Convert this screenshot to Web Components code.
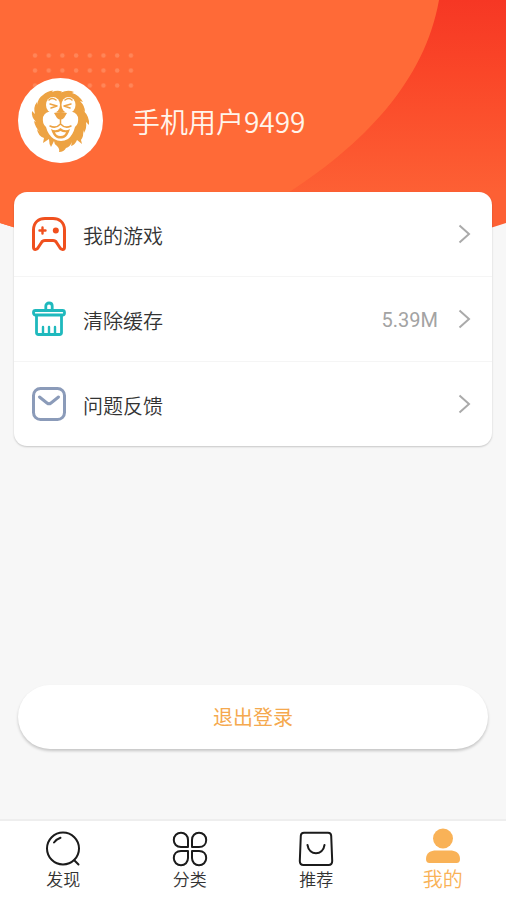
<!DOCTYPE html>
<html lang="zh-CN">
<head>
<meta charset="utf-8">
<meta name="viewport" content="width=device-width, initial-scale=1">
<title>我的</title>
<style>
body { margin: 0; background: #f7f7f7; font-family: Roboto, "Noto Sans CJK SC", sans-serif; }
</style>
</head>
<body>
<profile-page></profile-page>

<template id="t-page">
<style>
:host { display: flex; flex-direction: column; min-height: 100vh; position: relative; color: #333; }
page-backdrop { position: absolute; top: 0; left: 0; right: 0; z-index: -1; }
main { flex: 1; display: flex; flex-direction: column; }
menu-card { margin: 29px 14px 0; }
logout-button { margin: auto 18px 70px; }
</style>
<page-backdrop></page-backdrop>
<user-header name="手机用户9499"></user-header>
<main>
<menu-card>
<menu-row label="我的游戏">
<svg slot="icon" width="36" height="36" viewBox="0 0 36 36" fill="none" stroke="#f0501e" stroke-width="3" stroke-linejoin="round" stroke-linecap="round"><path d="M2.500 14C2.500 6 8 2.500 14 2.500H22C28 2.500 33.500 6 33.500 14V31Q33.500 33.500 31.500 33.500Q29.800 33.500 28.800 31.500L25.500 26.500Q24.500 24.500 22 24.500H14Q11.500 24.500 10.500 26.500L7.200 31.500Q6.200 33.500 4.500 33.500Q2.500 33.500 2.500 31Z"/><path stroke-width="2.400" d="M8.500 14.500H14.500M11.500 11.500V17.500"/><circle cx="24.800" cy="14.500" r="3" fill="#f0501e" stroke="none"/></svg>
</menu-row>
<menu-row label="清除缓存" value="5.39M">
<svg slot="icon" width="36" height="36" viewBox="0 0 36 36" fill="none" stroke="#1fb9bd" stroke-width="2.800" stroke-linejoin="round" stroke-linecap="round"><rect x="2.500" y="9.500" width="31" height="4.500" rx="2"/><path d="M14.800 9V5C14.800 1 21.200 1 21.200 5V9M5.500 15V31.500Q5.500 33.500 7.500 33.500H28.500Q30.500 33.500 30.500 31.500V15"/><path stroke-width="2.400" d="M12 26V32.500M18 26V32.500M24 26V32.500"/></svg>
</menu-row>
<menu-row label="问题反馈">
<svg slot="icon" width="36" height="36" viewBox="0 0 36 36" fill="none" stroke="#8b9bb9" stroke-width="3" stroke-linejoin="round" stroke-linecap="round"><rect x="2.500" y="2.500" width="31" height="31" rx="7"/><path d="M8.500 11L16 17Q18 18.600 20 17L27.500 11"/></svg>
</menu-row>
</menu-card>
<logout-button>退出登录</logout-button>
</main>
<tab-bar>
<tab-item label="发现">
<svg width="36" height="36" viewBox="0 0 36 36" fill="none" stroke="#1b1b1b" stroke-width="2" stroke-linecap="round"><circle cx="18" cy="17.500" r="16"/><path d="M29.500 29.500L33.500 33.500M9 11.500Q11.500 8.200 15.500 6.800"/></svg>
</tab-item>
<tab-item label="分类">
<svg width="36" height="36" viewBox="0 0 36 36" fill="none" stroke="#1b1b1b" stroke-width="2" stroke-linejoin="round"><path d="M16 16H9C4.500 16 1.800 13 1.800 9C1.800 4.800 5 1.800 9 1.800C13 1.800 16 4.800 16 9ZM20 16V9C20 4.800 23 1.800 27 1.800C31 1.800 34.200 4.800 34.200 9C34.200 13 31.500 16 27 16ZM16 20V27C16 31.200 13 34.200 9 34.200C5 34.200 1.800 31.200 1.800 27C1.800 23 4.500 20 9 20ZM20 20H27C31.500 20 34.200 23 34.200 27C34.200 31.200 31 34.200 27 34.200C23 34.200 20 31.200 20 27Z"/></svg>
</tab-item>
<tab-item label="推荐">
<svg width="36" height="36" viewBox="0 0 36 36" fill="none" stroke="#1b1b1b" stroke-width="2" stroke-linecap="round" stroke-linejoin="round"><path d="M6 1.800H30Q33 1.800 33.200 4.800L34.200 30Q34.200 34 30.500 34H5.500Q1.800 34 1.800 30L2.800 4.800Q3 1.800 6 1.800Z"/><path d="M9.500 14C11 25 25 25 26.500 14"/></svg>
</tab-item>
<tab-item label="我的" active>
<svg width="36" height="36" viewBox="0 0 36 36" fill="#f9b257"><circle cx="18" cy="10.500" r="10"/><path d="M1 31C1 24.500 6 22.500 11 22.500H25C30 22.500 35 24.500 35 31Q35 35 31.500 35H4.500Q1 35 1 31Z"/></svg>
</tab-item>
</tab-bar>
</template>

<template id="t-backdrop">
<style>
:host { display: block; height: 250px; }
svg { display: block; width: 100%; height: 100%; }
</style>
<svg viewBox="0 0 506 250" preserveAspectRatio="none" aria-hidden="true">
<defs>
<linearGradient id="g" x1="0" y1="0" x2="0" y2="1"><stop offset="0" stop-color="#f63724"/><stop offset="0.300" stop-color="#fa4628"/><stop offset="0.800" stop-color="#fd6034"/></linearGradient>
<pattern id="d" x="28" y="48" width="13.700" height="15" patternUnits="userSpaceOnUse"><circle cx="7" cy="7.500" r="2.200" fill="#ff8558"/></pattern>
</defs>
<path fill="url(#g)" d="M0 0H506V223Q480 232 440 240H60Q25 231 0 223Z"/>
<path fill="#ff6a37" d="M0 0H439C425 80 365 145 280 198L250 215V240H60Q25 231 0 223Z"/>
<rect x="28" y="48" width="109" height="45" fill="url(#d)"/>
</svg>
</template>

<template id="t-header">
<style>
:host { display: flex; align-items: center; gap: 29px; padding: 78px 18px 0; color: #fff5eb; }
svg { display: block; flex: none; }
h1 { margin: 0; font: 350 28px/40px "Noto Sans CJK SC", sans-serif; }
</style>
<svg width="85" height="85" viewBox="0 0 85 85" role="img" aria-label="头像">
<circle cx="42.500" cy="42.500" r="42.500" fill="#fff"/>
<path fill="#eda343" d="M25 17Q29 13 35 12.500L34 14Q39 12 44 13.500L43 14.500Q50 11.500 56 14L54 15Q61 17 65 24L62 23Q67 28 67 34L65 32Q72 39 71 47L68 44Q69 50 66 55L65 52Q66 58 63 62L64 66L59 62Q57 67 53 68L54 64Q52 69 48 70Q46 74 41 74Q42 71 39 68Q36 66 36 63L33 69Q31 66 31 61L25 65L26 60Q20 58 19 51L22 54Q17 49 16 43L18 44Q13 39 14 33L17 36Q15 29 19 24L19 27Q20 20 25 17Z"/>
<g fill="#fff"><ellipse cx="35" cy="27" rx="7" ry="8"/><ellipse cx="50.500" cy="27" rx="7" ry="8"/><path d="M38 34H47Q57 32 60 39Q61 46 57 49Q55 57 50 61Q43 65 36 61Q30 57 28 49Q24 46 25 39Q28 32 38 34Z"/></g>
<g fill="none" stroke="#eda343" stroke-linecap="round" stroke-linejoin="round" stroke-width="1.500"><path d="M31 22Q34 19 38 22M47 22Q51 19 54 22M32 26L39 28L33 30M53 26L46 28L52 30"/><path d="M42.500 40V46Q38 51 32 48M42.500 46Q47 51 53 48"/></g>
<path fill="#eda343" d="M36 35Q43 33 49 35L46 40Q42.500 43 39 40ZM33 51Q38 54 42.500 50Q47 54 52 51Q50 58 46 60Q42 61 39 60Q35 58 33 51Z"/>
<path fill="#fff" d="M37 54Q39 55 42.500 53Q46 55 48 54Q47 58 42.500 58Q38 58 37 54Z"/>
</svg>
<h1></h1>
</template>

<template id="t-card">
<style>
:host { display: block; background: #fff; border-radius: 13px; box-shadow: 0 1px 2px rgba(0,0,0,.2); }
::slotted(menu-row:not(:first-child)) { border-top: 1px solid #f5f5f5; }
</style>
<slot></slot>
</template>

<template id="t-row">
<style>
:host { display: block; }
button { display: flex; align-items: center; width: 100%; height: 84px; padding: 0 21px 0 17px; border: 0; background: none; color: #333; font: 400 20px/28px Roboto, "Noto Sans CJK SC", sans-serif; text-align: left; }
.label { flex: 1; margin-left: 16px; padding-top: 4px; font-family: "Noto Sans CJK SC", sans-serif; font-weight: 350; }
.value { color: #a3a3a3; margin-right: 20px; padding-top: 2px; }
svg { display: block; }
</style>
<button type="button"><slot name="icon"></slot><span class="label"></span><span class="value"></span>
<svg width="13" height="20" viewBox="0 0 13 20" fill="none" stroke="#aaa" stroke-width="2"><path d="M1.500 1.500L11 10L1.500 18.500"/></svg></button>
</template>

<template id="t-logout">
<style>
:host { display: block; }
button { display: block; width: 100%; height: 64px; padding: 0; border: 0; border-radius: 32px; background: #fff; color: #f5a94e; box-shadow: 0 2px 3px rgba(0,0,0,.2); font: 400 20px/28px "Noto Sans CJK SC", sans-serif; }
</style>
<button type="button"><slot></slot></button>
</template>

<template id="t-bar">
<style>
:host { display: block; background: #fff; border-top: 2px solid #eee; }
nav { display: flex; }
::slotted(tab-item) { flex: 1; }
</style>
<nav><slot></slot></nav>
</template>

<template id="t-tab">
<style>
:host { display: block; }
a { display: flex; flex-direction: column; align-items: center; height: 69px; padding-top: 10px; color: #333; text-decoration: none; font: 350 17px/24px "Noto Sans CJK SC", sans-serif; }
:host([active]) a { color: #f9b257; font-size: 20px; gap: 3px; padding-top: 7px; height: 72px; }
</style>
<a href="#"><slot></slot><span></span></a>
</template>

<script>
class Base extends HTMLElement {
  constructor() {
    super();
    this.attachShadow({ mode: "open" })
      .append(document.getElementById(this.constructor.template).content.cloneNode(true));
  }
  fill(selector, attribute) {
    this.shadowRoot.querySelector(selector).textContent = this.getAttribute(attribute) || "";
  }
}
customElements.define("page-backdrop", class extends Base { static template = "t-backdrop"; });
customElements.define("user-header", class extends Base {
  static template = "t-header";
  connectedCallback() { this.fill("h1", "name"); }
});
customElements.define("menu-card", class extends Base { static template = "t-card"; });
customElements.define("menu-row", class extends Base {
  static template = "t-row";
  connectedCallback() { this.fill(".label", "label"); this.fill(".value", "value"); }
});
customElements.define("logout-button", class extends Base { static template = "t-logout"; });
customElements.define("tab-bar", class extends Base { static template = "t-bar"; });
customElements.define("tab-item", class extends Base {
  static template = "t-tab";
  connectedCallback() {
    this.fill("span", "label");
    if (this.hasAttribute("active")) this.shadowRoot.querySelector("a").setAttribute("aria-current", "page");
  }
});
customElements.define("profile-page", class extends Base { static template = "t-page"; });
</script>
</body>
</html>
